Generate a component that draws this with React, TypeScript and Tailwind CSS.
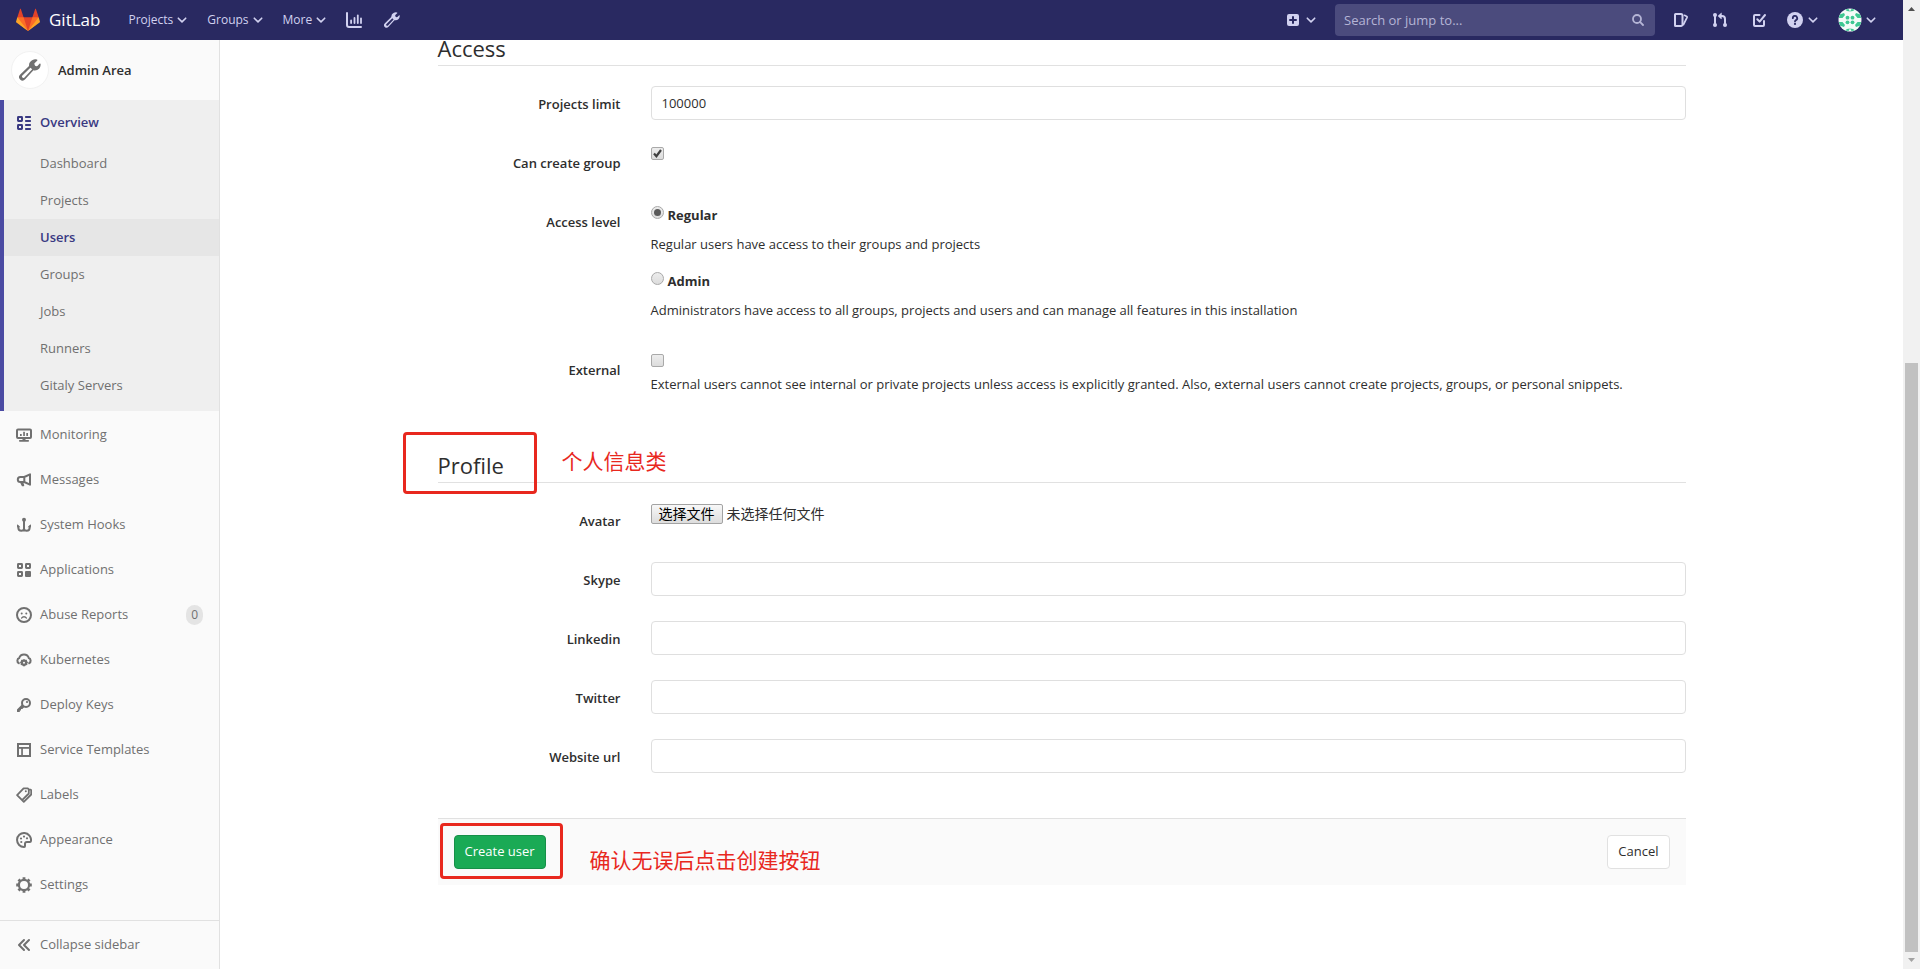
import type { ReactNode } from "react";

const FONT = "font-['Open_Sans','Noto_Sans_CJK_SC',sans-serif]";

type IconProps = { className?: string; children: ReactNode };

function Icon({ className = "size-4", children }: IconProps) {
  return (
    <svg viewBox="0 0 16 16" className={`shrink-0 ${className}`} fill="currentColor" aria-hidden="true">
      {children}
    </svg>
  );
}

function Chevron() {
  return (
    <svg viewBox="0 0 10 10" className="size-[10px] shrink-0" fill="none" stroke="currentColor" strokeWidth="1.6" strokeLinecap="round" strokeLinejoin="round" aria-hidden="true">
      <path d="M1.3 3.2 5 6.9l3.7-3.7" />
    </svg>
  );
}

function Wrench({ className }: { className?: string }) {
  return (
    <Icon className={className}>
      <path
        fillRule="evenodd"
        d="M9.9.7A4.6 4.6 0 0 1 13 .4c.4.1.5.5.2.8L11.3 3.1a.5.5 0 0 0-.1.5l.3 1c.1.2.2.3.4.4l1 .2c.2 0 .4 0 .5-.1l1.5-1.7c.3-.3.8-.2.8.2.1 1.200-.2 2.500-1.100 3.400a4.400 4.400 0 0 1-4.100 1.200l-6 6.600a2.600 2.600 0 0 1-3.700.1 2.600 2.600 0 0 1 .1-3.700L7.300 5a4.400 4.400 0 0 1 2.600-4.300zM8.300 6.300l-6 5.900a1.100 1.100 0 0 0 1.500 1.500L9.600 7.500z"
      />
    </Icon>
  );
}

function Tanuki() {
  return (
    <svg viewBox="0 0 36 36" className="size-6 shrink-0" aria-hidden="true">
      <path fill="#e24329" d="M2 14l9.380 9v-9l-4-12.280c-.205-.632-1.176-.632-1.380 0z" />
      <path fill="#e24329" d="M34 14l-9.380 9v-9l4-12.280c.205-.632 1.176-.632 1.380 0z" />
      <path fill="#e24329" d="M18 34.380 3 14 33 14Z" />
      <path fill="#fc6d26" d="M18 34.380 11.380 14 2 14 6 25Z" />
      <path fill="#fc6d26" d="M18 34.380 24.620 14 34 14 30 25Z" />
      <path fill="#fca326" d="M2 14L.1 20.160c-.18.565 0 1.200.5 1.560l17.420 12.660z" />
      <path fill="#fca326" d="M34 14l1.900 6.160c.18.565 0 1.200-.5 1.560L18 34.380z" />
    </svg>
  );
}

function Identicon() {
  return (
    <svg viewBox="0 0 24 24" className="size-6 shrink-0" aria-hidden="true">
      <clipPath id="avatar-clip">
        <circle cx="12" cy="12" r="11.500" />
      </clipPath>
      <g clipPath="url(#avatar-clip)">
        <rect width="24" height="24" fill="#f4fbf8" />
        <g fill="#3fc793">
          <circle cx="9.500" cy="9.700" r="1.900" />
          <circle cx="14.500" cy="9.700" r="1.900" />
          <circle cx="9.500" cy="14.300" r="1.900" />
          <circle cx="14.500" cy="14.300" r="1.900" />
          <path d="M1.500 6.500 6 5l1 2-2.500 3H1zM22.500 6.500 18 5l-1 2 2.500 3H23zM1.500 17.500 6 19l1-2-2.500-3H1zM22.500 17.500 18 19l-1-2 2.500-3H23z" />
          <path d="M7 1.500 10.500 1 12 3.500 9 3zM17 1.500 13.500 1 12 3.500 15 3zM7 22.500l3.500.5 1.500-2.500-3 .5zM17 22.500l-3.500.5-1.500-2.500 3 .5z" />
        </g>
      </g>
    </svg>
  );
}

function NavMenu({ label, className }: { label: string; className: string }) {
  return (
    <button type="button" className={`flex items-center gap-1 text-xs font-medium ${className}`}>
      {label}
      <Chevron />
    </button>
  );
}

function Navbar() {
  return (
    <header className="relative z-10 flex h-10 shrink-0 items-center bg-[#292961] pr-[27px] pl-4 text-[#d1d1f0]">
      <a href="#home" className="flex items-center gap-[9px] text-[17px] text-white">
        <Tanuki />
        GitLab
      </a>
      <nav className="ml-[28px] flex items-center">
        <NavMenu label="Projects" className="mr-5" />
        <NavMenu label="Groups" className="mr-5" />
        <NavMenu label="More" className="mr-5" />
        <a href="#analytics" aria-label="Instance statistics" className="mr-[22px]">
          <Icon>
            <path d="M1 0a1 1 0 0 1 1 1v12a1 1 0 0 0 1 1h12a1 1 0 0 1 0 2H3a3 3 0 0 1-3-3V1a1 1 0 0 1 1-1z" />
            <rect x="4.200" y="7.500" width="1.800" height="4.500" rx=".9" />
            <rect x="7.600" y="5" width="1.800" height="7" rx=".9" />
            <rect x="10.900" y="2.500" width="1.800" height="9.500" rx=".9" />
            <rect x="14.100" y="5.500" width="1.800" height="6.500" rx=".9" />
          </Icon>
        </a>
        <a href="#admin" aria-label="Admin area">
          <Wrench />
        </a>
      </nav>

      <div className="ml-auto flex items-center">
        <button type="button" aria-label="New" className="mr-[19px] flex items-center gap-[5px]">
          <Icon>
            <path fillRule="evenodd" d="M4 2h8a2 2 0 0 1 2 2v8a2 2 0 0 1-2 2H4a2 2 0 0 1-2-2V4a2 2 0 0 1 2-2zm3 5H5a1 1 0 0 0 0 2h2v2a1 1 0 0 0 2 0V9h2a1 1 0 0 0 0-2H9V5a1 1 0 0 0-2 0z" />
          </Icon>
          <Chevron />
        </button>
        <label className="mr-[18px] flex h-8 w-80 items-center rounded bg-[#4b4b7d] pr-[11px] pl-[9px] text-[#b5b5d6]">
          <input aria-label="Search or jump to" placeholder="Search or jump to..." className="min-w-0 flex-1 bg-transparent pt-px text-[13px] outline-none placeholder:text-[#b5b5d6]" />
          <svg viewBox="0 0 12 12" className="size-3 shrink-0" fill="none" stroke="currentColor" strokeWidth="1.800" strokeLinecap="round" aria-hidden="true">
            <circle cx="5" cy="5" r="4" />
            <path d="m8.200 8.200 2.800 2.800" />
          </svg>
        </label>
        <a href="#issues" aria-label="Issues" className="mr-[23px]">
          <Icon>
            <path fill="none" stroke="currentColor" strokeWidth="2" strokeLinejoin="round" d="M2.500 2h5.500a1.500 1.500 0 0 1 1.500 1.500v9A1.500 1.500 0 0 1 8 14H2.500a.5.500 0 0 1-.5-.5v-11a.5.500 0 0 1 .5-.5z" />
            <path fill="none" stroke="currentColor" strokeWidth="1.700" strokeLinecap="round" strokeLinejoin="round" d="m11.500 3.300 2.300 1.200c.3.200.4.500.3.800L10.500 12.500" />
          </Icon>
        </a>
        <a href="#merge-requests" aria-label="Merge requests" className="mr-[23px]">
          <Icon>
            <g fill="none" stroke="currentColor" strokeWidth="2">
              <path d="M3 3v10" />
              <path d="M13 13V7a3 3 0 0 0-3-3H8.500" />
            </g>
            <circle cx="3" cy="3" r="2" />
            <circle cx="3" cy="13" r="2" />
            <circle cx="13" cy="13" r="2" />
            <path d="M9.700 1.200v5.600c0 .4-.4.500-.7.300L6.200 4.400a.6.600 0 0 1 0-.8L9 .9c.3-.3.700-.1.700.3z" />
          </Icon>
        </a>
        <a href="#todos" aria-label="To-do list" className="mr-[20px]">
          <Icon>
            <g fill="none" stroke="currentColor" strokeWidth="2" strokeLinecap="round" strokeLinejoin="round">
              <path d="M8.500 3H4a1 1 0 0 0-1 1v9a1 1 0 0 0 1 1h8a1 1 0 0 0 1-1V9" />
              <path d="m6.300 7.300 2.300 2.300L14 3" />
            </g>
          </Icon>
        </a>
        <button type="button" aria-label="Help" className="mr-[20px] flex items-center gap-[5px]">
          <Icon>
            <circle cx="8" cy="8" r="8" />
            <path fill="none" stroke="#292961" strokeWidth="1.800" strokeLinecap="round" d="M5.800 6.200A2.200 2.200 0 1 1 9 8.100c-.7.400-1 .7-1 1.300" />
            <circle cx="8" cy="11.900" r="1.100" fill="#292961" />
          </Icon>
          <Chevron />
        </button>
        <button type="button" aria-label="Account" className="flex items-center gap-1">
          <Identicon />
          <Chevron />
        </button>
      </div>
    </header>
  );
}

const overviewLinks = ["Dashboard", "Projects", "Users", "Groups", "Jobs", "Runners", "Gitaly Servers"];

const stroke = { fill: "none", stroke: "currentColor", strokeWidth: 2 } as const;

const sections: { label: string; badge?: string; icon: ReactNode }[] = [
  {
    label: "Monitoring",
    icon: (
      <>
        <rect x="1" y="2.500" width="14" height="8.500" rx="1" {...stroke} />
        <rect x="4" y="7" width="1.700" height="2" />
        <rect x="7.200" y="4.800" width="1.700" height="4.200" />
        <rect x="10.300" y="6" width="1.700" height="3" />
        <path d="M6.500 11h3v2h2.700a.8.800 0 0 1 0 1.700H3.800a.8.800 0 0 1 0-1.700h2.700z" />
      </>
    ),
  },
  {
    label: "Messages",
    icon: (
      <>
        <path {...stroke} strokeLinejoin="round" d="M14 2.300v10.400L8.300 10V5z" />
        <path {...stroke} strokeLinejoin="round" d="M8.300 5H4.300a2.500 2.500 0 0 0 0 5h4" />
        <path d="M3.800 10h3.400l1 3.300a.8.800 0 0 1-.6 1H6.500a.8.800 0 0 1-.8-.6z" />
      </>
    ),
  },
  {
    label: "System Hooks",
    icon: (
      <>
        <circle cx="8" cy="2.800" r="2" />
        <path {...stroke} strokeLinecap="round" strokeLinejoin="round" d="M8 3v10M2.300 9.500v1c0 2 1.300 3.200 3 3.200 1.500 0 2.700-1 2.700-2.200 0 1.200 1.200 2.200 2.700 2.200 1.700 0 3-1.200 3-3.200v-1" />
        <path d="M1 10.300V8c0-.4.500-.6.800-.3l2.600 2.600zM15 10.300V8c0-.4-.5-.6-.8-.3l-2.600 2.600z" />
      </>
    ),
  },
  {
    label: "Applications",
    icon: (
      <>
        <rect x="2" y="2" width="4" height="4" rx=".4" {...stroke} />
        <rect x="10" y="2" width="4" height="4" rx=".4" {...stroke} />
        <rect x="2" y="10" width="4" height="4" rx=".4" {...stroke} />
        <rect x="9" y="9" width="6" height="6" rx="1" />
      </>
    ),
  },
  {
    label: "Abuse Reports",
    badge: "0",
    icon: (
      <>
        <circle cx="8" cy="8" r="7" {...stroke} />
        <circle cx="5.700" cy="6.500" r="1" />
        <circle cx="10.300" cy="6.500" r="1" />
        <path {...stroke} strokeWidth="1.500" strokeLinecap="round" d="M5.700 11c.5-.9 1.300-1.300 2.300-1.300s1.800.4 2.300 1.300" />
      </>
    ),
  },
  {
    label: "Kubernetes",
    icon: (
      <>
        <path {...stroke} strokeLinecap="round" d="M2.800 11.200A2.900 2.900 0 0 1 3.200 6 5 5 0 0 1 12.800 6 2.900 2.900 0 0 1 13.200 11.200" />
        <path fillRule="evenodd" d="m8 7 1.300.8 1.500-.1.300 1.500 1 1.100-.8 1.200v1.500l-1.500.3-1 1.100-.8-.4-.8.4-1-1.100-1.500-.3v-1.500l-.8-1.200 1-1.100.3-1.500 1.500.1zm0 2.700a1 1 0 1 0 0 2 1 1 0 0 0 0-2z" />
      </>
    ),
  },
  {
    label: "Deploy Keys",
    icon: (
      <>
        <circle cx="10" cy="6" r="4" {...stroke} />
        <circle cx="11" cy="5" r="1.100" />
        <path d="m6.200 7.300 2.500 2.500-2.400 2.300H5v1.300H3.800V15H1.600a.6.600 0 0 1-.6-.6v-1.900z" />
      </>
    ),
  },
  {
    label: "Service Templates",
    icon: (
      <>
        <rect x="2" y="2" width="12" height="12" {...stroke} />
        <path d="M2 5h12v1.800H2z" />
        <path d="M5.200 6h1.700v8H5.200z" />
      </>
    ),
  },
  {
    label: "Labels",
    icon: (
      <>
        <path {...stroke} strokeWidth="1.800" strokeLinejoin="round" d="M7.600 1.300h4.200l1 1v4.200l-6.700 6.700-5-5zM13.500 2.300l1.700.8v4.400L7.800 14.900l-1.700-1.700" />
        <circle cx="9.800" cy="4.300" r="1" />
      </>
    ),
  },
  {
    label: "Appearance",
    icon: (
      <>
        <path {...stroke} strokeLinejoin="round" d="M15 8.800A7 7 0 1 0 8.200 15c.6 0 .8-.4.800-1v-2.200c0-1.100.8-1.900 1.900-1.900H14c.6 0 .9-.4 1-1.100z" />
        <circle cx="5.300" cy="10" r="1.100" />
        <circle cx="5" cy="6.500" r="1.100" />
        <circle cx="8" cy="4.600" r="1.100" />
        <circle cx="11" cy="6.300" r="1.100" />
      </>
    ),
  },
  {
    label: "Settings",
    icon: (
      <>
        <circle cx="8" cy="8" r="5.100" {...stroke} strokeWidth="2.200" />
        <g {...stroke} strokeWidth="2.800">
          <path d="M8 .2v2.800M8 13v2.800M.2 8H3M13 8h2.800M2.500 2.500l2 2M11.500 11.500l2 2M13.500 2.500l-2 2M4.500 11.500l-2 2" />
        </g>
      </>
    ),
  },
];

function Sidebar() {
  return (
    <aside className="flex w-[220px] shrink-0 flex-col border-r border-[#e1e1e1] bg-[#fafafa] text-[13px] text-[#707070]">
      <a href="#admin" className="flex h-[60px] shrink-0 items-center gap-[9px] pl-[11px] font-semibold text-[#2e2e2e]">
        <span className="flex size-[38px] items-center justify-center rounded-full border border-[#f2f2f2] bg-white text-[#707070]">
          <Wrench className="size-[22px]" />
        </span>
        <span className="pt-[2px]">Admin Area</span>
      </a>
      <nav className="min-h-0 flex-1">
        <div className="mb-px border-l-4 border-[#4b4ba3] bg-[#efefef] pb-[7px]">
          <a href="#overview" className="flex h-[45px] items-center gap-2 pl-3 font-semibold text-[#393982]">
            <Icon>
              <rect x="2" y="2" width="4" height="4" rx=".4" {...stroke} />
              <rect x="2" y="10" width="4" height="4" rx=".4" {...stroke} />
              <rect x="9" y="1" width="6" height="2" rx=".7" />
              <rect x="9" y="5" width="6" height="2" rx=".7" />
              <rect x="9" y="9" width="6" height="2" rx=".7" />
              <rect x="9" y="13" width="6" height="2" rx=".7" />
            </Icon>
            Overview
          </a>
          <ul>
            {overviewLinks.map((label) => (
              <li key={label}>
                <a
                  href={`#${label}`}
                  className={`flex h-[37px] items-center pt-px pl-9 ${label === "Users" ? "bg-[#e6e6e6] font-semibold text-[#393982]" : ""}`}
                >
                  {label}
                </a>
              </li>
            ))}
          </ul>
        </div>
        <ul>
          {sections.map(({ label, badge, icon }) => (
            <li key={label}>
              <a href={`#${label}`} className="flex h-[45px] items-center gap-2 pr-4 pl-4">
                <Icon>{icon}</Icon>
                {label}
                {badge && <span className="ml-auto rounded-full bg-[#e4e4e4] px-[5px] text-xs leading-5">{badge}</span>}
              </a>
            </li>
          ))}
        </ul>
      </nav>
      <button type="button" className="flex h-[49px] shrink-0 items-center gap-2 border-t border-[#e1e1e1] pl-4">
        <Icon>
          <path {...stroke} strokeLinecap="round" strokeLinejoin="round" d="M8 3 3 8l5 5M13 3 8 8l5 5" />
        </Icon>
        Collapse sidebar
      </button>
    </aside>
  );
}

function Row({ label, htmlFor, children }: { label: string; htmlFor?: string; children: ReactNode }) {
  const labelClass = "w-1/6 px-[15px] pt-2 text-right leading-5 font-semibold";
  return (
    <div className="-mx-[15px] mb-4 flex min-h-[43px]">
      {htmlFor ? (
        <label htmlFor={htmlFor} className={labelClass}>
          {label}
        </label>
      ) : (
        <span id="access-level-label" className={labelClass}>
          {label}
        </span>
      )}
      <div className="w-5/6 px-[15px]">{children}</div>
    </div>
  );
}

function TextRow({ label, id, value }: { label: string; id: string; value?: string }) {
  return (
    <Row label={label} htmlFor={id}>
      <input id={id} type="text" defaultValue={value} className="block h-[34px] w-full rounded border border-[#dfdfdf] bg-white px-[10px] text-[13px]" />
    </Row>
  );
}

function Checkbox({ id, checked }: { id: string; checked?: boolean }) {
  return (
    <span className="relative mt-[2px] block size-[13px]">
      <input
        id={id}
        type="checkbox"
        defaultChecked={checked}
        className="peer block size-[13px] appearance-none rounded-[2px] border border-[#a9a9a9] bg-linear-to-b from-[#ededed] to-[#dcdcdc]"
      />
      <svg viewBox="0 0 13 13" className="pointer-events-none absolute inset-0 hidden size-[13px] peer-checked:block" fill="none" stroke="#404040" strokeWidth="2.200" aria-hidden="true">
        <path d="m3 6.500 2.400 2.700L10 3" />
      </svg>
    </span>
  );
}

function Radio({ id, label, help, checked }: { id: string; label: string; help: string; checked?: boolean }) {
  return (
    <div>
      <div className="flex gap-1">
        <span className="relative mt-[1px] block size-[13px]">
          <input
            id={id}
            type="radio"
            name="access-level"
            defaultChecked={checked}
            className="peer block size-[13px] appearance-none rounded-full border border-[#a9a9a9] bg-linear-to-b from-[#ededed] to-[#dcdcdc]"
          />
          <span className="pointer-events-none absolute inset-[3px] hidden rounded-full bg-[#5a5a5a] peer-checked:block" />
        </span>
        <label htmlFor={id} className="leading-5 font-bold">
          {label}
        </label>
      </div>
      <p className="mt-[9px] leading-5">{help}</p>
    </div>
  );
}

function SectionTitle({ children }: { children: ReactNode }) {
  return <h2 className="relative mb-5 border-b border-[#e1e1e1] pb-[9px] text-[22px] leading-4">{children}</h2>;
}

function UserForm() {
  return (
    <form className="mx-auto flex max-w-[1248px] flex-col text-[13px] text-[#2e2e2e]" onSubmit={(e) => e.preventDefault()}>
      <section className="flow-root">
        <SectionTitle>Access</SectionTitle>
        <TextRow label="Projects limit" id="projects-limit" value="100000" />
        <Row label="Can create group" htmlFor="can-create-group">
          <Checkbox id="can-create-group" checked />
        </Row>
        <Row label="Access level">
          <div role="radiogroup" aria-labelledby="access-level-label" className="flex flex-col gap-[17px] pt-px pb-4">
            <Radio id="regular" label="Regular" help="Regular users have access to their groups and projects" checked />
            <Radio
              id="admin"
              label="Admin"
              help="Administrators have access to all groups, projects and users and can manage all features in this installation"
            />
          </div>
        </Row>
        <Row label="External" htmlFor="external">
          <Checkbox id="external" />
          <p className="mt-[7px] pb-px leading-5">
            External users cannot see internal or private projects unless access is explicitly granted. Also, external users cannot create projects, groups, or personal snippets.
          </p>
        </Row>
      </section>

      <section className="mt-[46px] flow-root">
        <SectionTitle>
          Profile
          <span className="absolute -top-[25px] -left-[35px] h-[62px] w-[134px] rounded border-3 border-[#e8281e]" />
          <span className="absolute -top-1 left-[124px] text-[21px] text-[#e8281e]">个人信息类</span>
        </SectionTitle>
        <Row label="Avatar" htmlFor="avatar">
          <div className="relative inline-flex items-center gap-1 pt-[1px]">
            <input id="avatar" type="file" className="absolute inset-0 w-full opacity-0" />
            <span className="flex h-5 items-center rounded-[2px] border border-[#a3a3a3] bg-linear-to-b from-[#f8f8f8] to-[#dddddd] px-[7px] text-sm text-black">
              选择文件
            </span>
            <span className="text-sm leading-5">未选择任何文件</span>
          </div>
        </Row>
        <TextRow label="Skype" id="skype" />
        <TextRow label="Linkedin" id="linkedin" />
        <TextRow label="Twitter" id="twitter" />
        <TextRow label="Website url" id="website-url" />
      </section>

      <div className="relative mt-5 flex justify-between border-t border-[#e1e1e1] bg-[#fafafa] p-4">
        <button type="submit" className="h-[34px] rounded border border-[#168f48] bg-[#1aaa55] px-[10px] text-white">
          Create user
        </button>
        <span className="absolute top-1 left-[2px] h-14 w-[123px] rounded border-3 border-[#e8281e]" />
        <span className="absolute top-[25px] left-[152px] text-[21px] leading-8 text-[#e8281e]">确认无误后点击创建按钮</span>
        <button type="button" className="h-[34px] rounded border border-[#e1e1e1] bg-white px-[10px]">
          Cancel
        </button>
      </div>
    </form>
  );
}

function ScrollTrack() {
  return (
    <div className="flex w-[17px] shrink-0 flex-col items-center justify-between bg-[#f1f1f1]" aria-hidden="true">
      <svg viewBox="0 0 17 17" className="size-[17px]" fill="#505050">
        <path d="M5 11h7L8.500 7z" />
      </svg>
      <div className="flex w-[13px] flex-1 flex-col justify-end">
        <div className="h-[63%] bg-[#c1c1c1]" />
      </div>
      <svg viewBox="0 0 17 17" className="size-[17px]" fill="#a3a3a3">
        <path d="M5 6h7l-3.500 4z" />
      </svg>
    </div>
  );
}

export default function App() {
  return (
    <div className={`flex h-screen overflow-hidden bg-white ${FONT}`}>
      <div className="flex min-w-0 flex-1 flex-col">
        <Navbar />
        <div className="flex min-h-0 flex-1">
          <Sidebar />
          <main className="min-w-0 flex-1 px-4">
            <UserForm />
          </main>
        </div>
      </div>
      <ScrollTrack />
    </div>
  );
}
